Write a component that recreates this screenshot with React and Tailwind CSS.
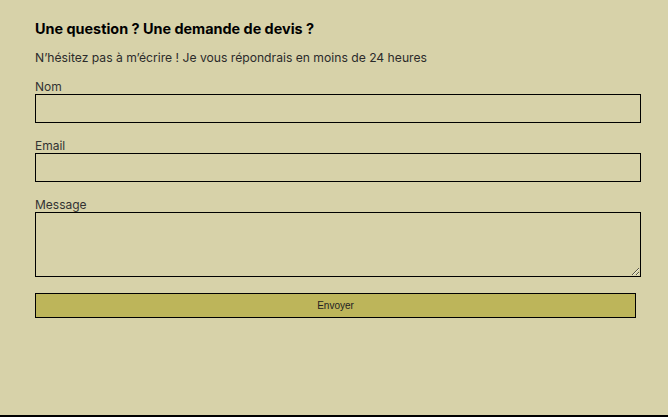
export default function App() {
    return (
        <div className="w-[668px] h-[417px] bg-[#d7d2a9] border-b-2 border-black font-['Inter',sans-serif] text-[#222]">
            <div className="pl-[35px] pt-[20px]">
                <h2 className="text-[14.4px] leading-[18px] font-bold text-black">Une question ? Une demande de devis ?</h2>
                <p className="mt-[12px] text-[12.15px] leading-[15px] text-[#2b2b2b]">
                    N’hésitez pas à m’écrire ! Je vous répondrais en moins de 24 heures
                </p>

                <form className="mt-[14px]" onSubmit={(e) => e.preventDefault()}>
                    <label className="block text-[12px] leading-[15px] text-[#333]">Nom</label>
                    <input className="block w-[606px] h-[29px] border border-black bg-transparent outline-none" />

                    <label className="block mt-[15px] text-[12px] leading-[15px] text-[#333]">Email</label>
                    <input className="block w-[606px] h-[29px] border border-black bg-transparent outline-none" />

                    <label className="block mt-[15px] text-[12px] leading-[15px] text-[#333]">Message</label>
                    <textarea className="block w-[606px] h-[65px] border border-black bg-transparent outline-none" />

                    <button className="block mt-[16px] w-[601px] h-[25px] border border-black bg-[#bdb55a] font-['Liberation_Sans',sans-serif] text-[10px] text-[#222]">
                        Envoyer
                    </button>
                </form>
            </div>
        </div>
    );
}
